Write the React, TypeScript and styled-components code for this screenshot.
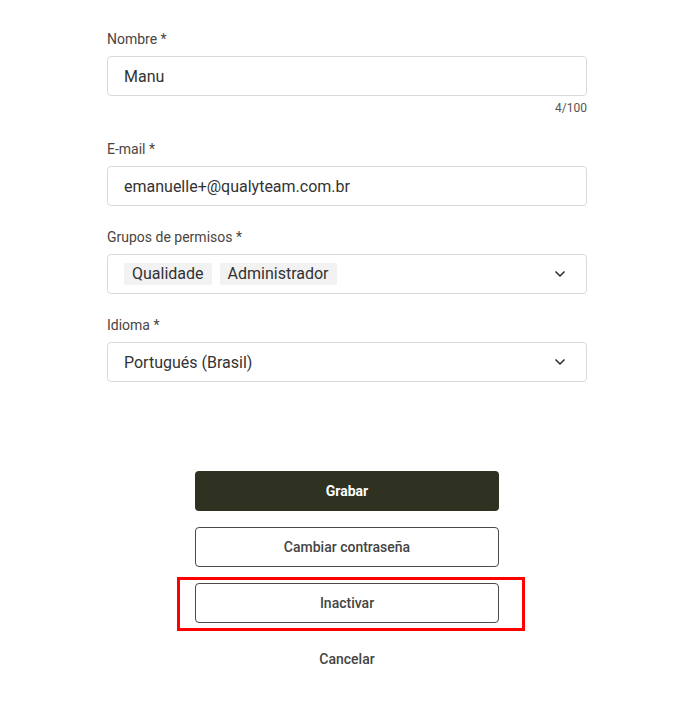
import React from "react";
import styled, { createGlobalStyle } from "styled-components";
import { ChevronDown } from "lucide-react";

const GlobalStyle = createGlobalStyle`
  body {
    margin: 0;
    background: #ffffff;
    font-family: Roboto, "Liberation Sans", Arial, sans-serif;
  }
`;

const Page = styled.div`
  width: 480px;
  margin-left: 107px;
  padding-top: 29px;
  display: flex;
  flex-direction: column;
`;

const Field = styled.div<{ $gap?: number }>`
  display: flex;
  flex-direction: column;
  margin-bottom: ${(p) => p.$gap ?? 21}px;
`;

const Label = styled.label`
  font-size: 14px;
  line-height: 20px;
  color: #4a4540;
  margin-bottom: 7px;
`;

const Box = styled.div`
  box-sizing: border-box;
  height: 40px;
  border: 1px solid #d9d9d9;
  border-radius: 4px;
  display: flex;
  align-items: center;
  padding: 0 18px 0 16px;
  font-size: 16px;
  color: #333333;
`;

const Value = styled.span`
  flex: 1;
`;

const Chips = styled.div`
  flex: 1;
  display: flex;
  gap: 8px;
`;

const Chip = styled.span`
  background: #f2f2f2;
  border-radius: 2px;
  padding: 0 8px;
  line-height: 22px;
  font-size: 16px;
  color: #333333;
`;

const Counter = styled.div`
  margin-top: 4px;
  font-size: 12px;
  line-height: 16px;
  color: #555555;
  text-align: right;
`;

const Actions = styled.div`
  margin-top: 89px;
  display: flex;
  flex-direction: column;
  align-items: center;
  gap: 16px;
`;

const Button = styled.button<{ $variant?: "primary" | "outline" | "text" }>`
  box-sizing: border-box;
  width: 304px;
  height: 40px;
  border-radius: 4px;
  font-family: Roboto, "Liberation Sans", Arial, sans-serif;
  font-size: 14px;
  cursor: pointer;
  background: ${(p) => (p.$variant === "primary" ? "#2f3221" : p.$variant === "text" ? "transparent" : "#ffffff")};
  color: ${(p) => (p.$variant === "primary" ? "#ffffff" : "#444444")};
  font-weight: ${(p) => (p.$variant === "primary" ? 700 : 500)};
  border: ${(p) => (p.$variant === "outline" ? "1px solid #4a4a4a" : "none")};
`;

const Highlight = styled.div`
  position: relative;
  &::after {
    content: "";
    position: absolute;
    left: -18px;
    top: -6px;
    right: -26px;
    bottom: -8px;
    border: 3px solid #ff0000;
    pointer-events: none;
  }
`;

const Chevron = () => <ChevronDown size={16} strokeWidth={2.5} color="#333" />;

export default function App() {
  return (
    <>
      <GlobalStyle />
      <Page>
        <Field $gap={23}>
          <Label>Nombre *</Label>
          <Box>
            <Value>Manu</Value>
          </Box>
          <Counter>4/100</Counter>
        </Field>
        <Field>
          <Label>E-mail *</Label>
          <Box>
            <Value>emanuelle+@qualyteam.com.br</Value>
          </Box>
        </Field>
        <Field>
          <Label>Grupos de permisos *</Label>
          <Box>
            <Chips>
              <Chip>Qualidade</Chip>
              <Chip>Administrador</Chip>
            </Chips>
            <Chevron />
          </Box>
        </Field>
        <Field $gap={0}>
          <Label>Idioma *</Label>
          <Box>
            <Value>Portugués (Brasil)</Value>
            <Chevron />
          </Box>
        </Field>
        <Actions>
          <Button $variant="primary">Grabar</Button>
          <Button $variant="outline">Cambiar contraseña</Button>
          <Highlight>
            <Button $variant="outline">Inactivar</Button>
          </Highlight>
          <Button $variant="text">Cancelar</Button>
        </Actions>
      </Page>
    </>
  );
}
